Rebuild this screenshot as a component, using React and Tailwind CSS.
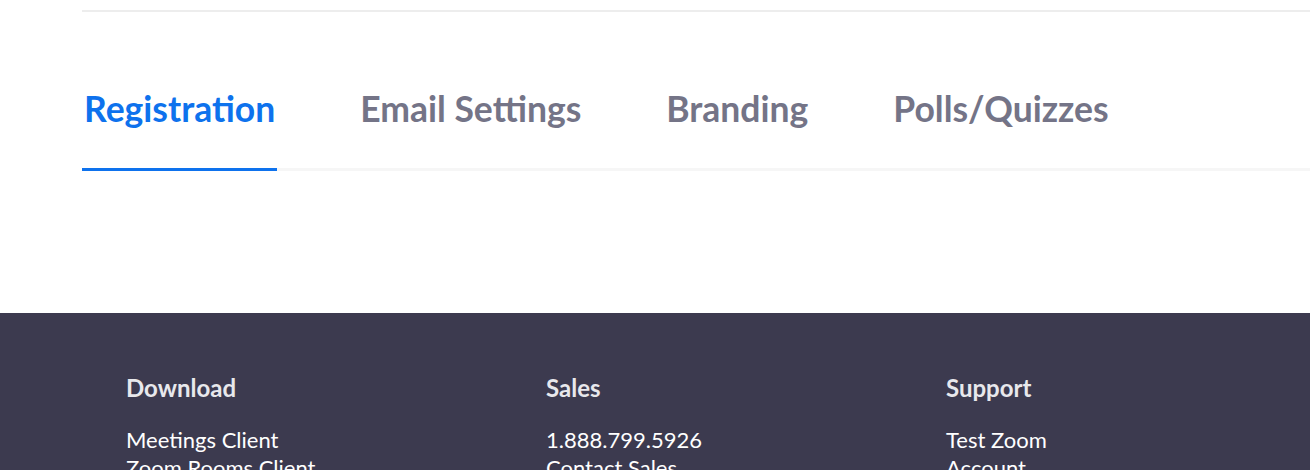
import React from 'react';

const tabs = ['Registration', 'Email Settings', 'Branding', 'Polls/Quizzes'];

const columns = [
  { title: 'Download', links: ['Meetings Client', 'Zoom Rooms Client', 'Browser Extension'], w: 'w-[420px]' },
  { title: 'Sales', links: ['1.888.799.5926', 'Contact Sales', 'Plans & Pricing'], w: 'w-[400px]' },
  { title: 'Support', links: ['Test Zoom', 'Account', 'Support Center'], w: 'w-[300px]' },
];

export default function App() {
  return (
    <div className="min-h-[470px] bg-white font-['Lato','Noto_Sans',sans-serif]">
      <div className="pt-[10px] pl-[82px]">
        <div className="h-[2px] bg-[#ededed]" />
        <div className="mt-[75px] flex border-b-[3px] border-[#f6f6f6]">
          {tabs.map((t, i) => (
            <div
              key={t}
              className={
                'mb-[-3px] px-[2px] pb-[37px] text-[35.5px] leading-[44px] font-bold ' +
                (i === 0 ? 'border-b-[3px] border-[#0e72ed] text-[#0e72ed]' : 'ml-[81px] text-[#747487]')
              }
            >
              {t}
            </div>
          ))}
        </div>
      </div>
      <div className="mt-[142px] bg-[#3c3a4f] pl-[126px] pt-[61px] pb-10">
        <div className="flex">
          {columns.map(c => (
            <div key={c.title} className={c.w}>
              <h3 className="text-[24px] leading-[28px] font-bold text-[#e8e8ec]">{c.title}</h3>
              <ul className="mt-[27px] space-y-[6px]">
                {c.links.map(l => (
                  <li key={l} className="text-[22px] leading-[22px] text-white">{l}</li>
                ))}
              </ul>
            </div>
          ))}
        </div>
      </div>
    </div>
  );
}
